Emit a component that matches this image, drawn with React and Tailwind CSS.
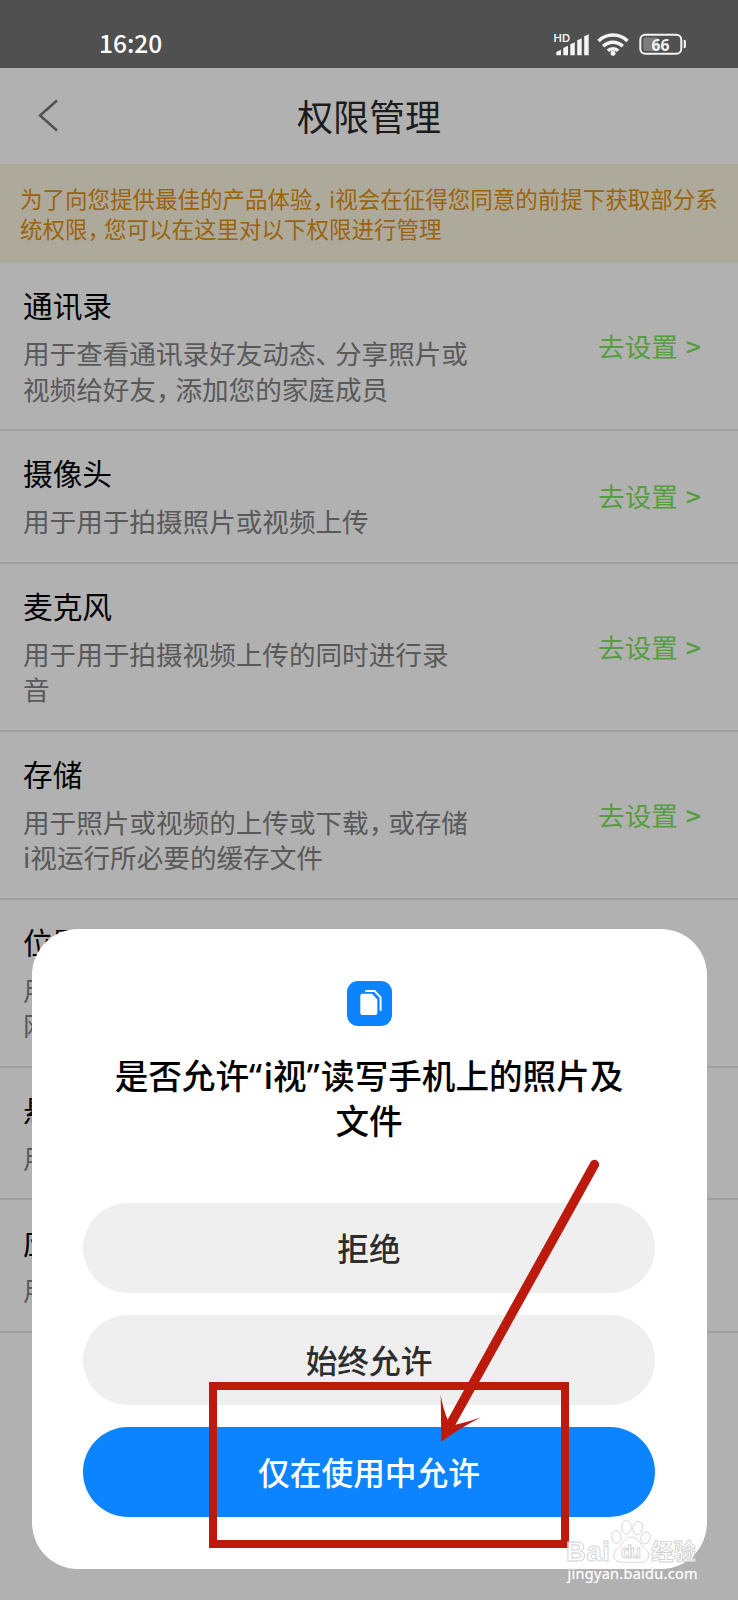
import clsx from 'clsx';

const permissions = [
  {
    title: '通讯录',
    lines: ['用于查看通讯录好友动态、分享照片或', '视频给好友，添加您的家庭成员'],
  },
  { title: '摄像头', lines: ['用于用于拍摄照片或视频上传'] },
  { title: '麦克风', lines: ['用于用于拍摄视频上传的同时进行录', '音'] },
  {
    title: '存储',
    lines: ['用于照片或视频的上传或下载，或存储', 'i视运行所必要的缓存文件'],
  },
  { title: '位置', lines: ['用', '网'] },
  { title: '悬', lines: ['用'] },
  { title: '应', lines: ['用'] },
];

const actions = [
  { label: '拒绝' },
  { label: '始终允许' },
  { label: '仅在使用中允许', primary: true },
];

// Full-width punctuation is set tighter than the characters around it
const Tight = ({ children }) =>
  children.split(/([，、])/).map((part, i) =>
    part === '，' || part === '、' ? (
      <span key={i} className="tracking-[-0.27em]">{part}</span>
    ) : (
      part
    )
  );

const StatusBar = () => (
  <div className="h-[68px] shrink-0 bg-[#505050] flex items-center justify-between pt-[17px] pl-[99px] pr-[50px] text-white">
    <span className="pt-0.5 text-[24.500px] leading-none font-medium">16:20</span>
    <svg className="w-[134px] h-7" viewBox="554 28.5 134 28" fill="#f4f4f4">
      <text x="553.500" y="41" fontSize="10" fontWeight="600" textLength="16.500" lengthAdjust="spacingAndGlyphs" fontFamily="Inter, sans-serif">HD</text>
      {/* Сигнал */}
      <path d="M556.300 51.500l4.700-2.200v5.400h-4.700zM563.300 47.500l4.700-2.200v9.400h-4.700zM570.300 43.700l4.500-2v13h-4.500zM577.200 39.700l4.500-2v17h-4.500zM584.200 35.700l4.500-2v21h-4.500z" />
      {/* Wi-Fi */}
      <g fill="none" stroke="#f4f4f4" strokeWidth="3.500">
        <path d="M598.500 40.600a20.500 20.500 0 0 1 29 0" />
        <path d="M603.200 45.700a14 14 0 0 1 19.600 0" />
        <path d="M607.800 50.300a7.500 7.500 0 0 1 10.400 0" />
      </g>
      <circle cx="613" cy="52.800" r="2.500" />
      {/* Батарея */}
      <rect x="640.300" y="34.300" width="41" height="19" rx="5" fill="none" stroke="#f4f4f4" strokeWidth="2" />
      <rect x="643.300" y="37" width="15" height="13.500" rx="2" fill="#7d7d7d" />
      <path d="M683.700 39.500h1.200a1 1 0 0 1 1 1v6a1 1 0 0 1-1 1h-1.200z" />
      <text x="651.500" y="50" fontSize="15.500" fontWeight="700" textLength="18" lengthAdjust="spacingAndGlyphs" fontFamily="'Open Sans', sans-serif">66</text>
    </svg>
  </div>
);

const Header = () => (
  <div className="relative h-24 shrink-0 flex items-center justify-center">
    <svg className="absolute left-[38px] top-[31px] w-5 h-[33px]" viewBox="0 0 20 33" fill="none" stroke="#505050" strokeWidth="2.4">
      <path d="M19 1.500L2 16.500L19 31.500" />
    </svg>
    <h1 className="pb-0.5 text-[36px] leading-none text-[#1c1c1c]">权限管理</h1>
  </div>
);

const PermissionRow = ({ title, lines }) => (
  <div
    className={clsx(
      'shrink-0 flex items-center justify-between border-b-2 border-[#9f9f9f] pl-[23px] pr-[37px]',
      lines.length > 1 ? 'h-[168px]' : 'h-[132.500px]'
    )}
  >
    <div className="self-start pt-6">
      <h2 className="text-[29.700px] leading-9 mb-3 text-black">{title}</h2>
      {lines.map(line => (
        <p key={line} className="text-[26.600px] leading-[35.500px] whitespace-nowrap text-[#595959]">
          <Tight>{line}</Tight>
        </p>
      ))}
    </div>
    <span className="text-[26.600px] [word-spacing:2px] text-[#559d3e]">
      去设置 <span className="font-medium">&gt;</span>
    </span>
  </div>
);

const FilesIcon = () => (
  <svg className="size-[45px] shrink-0" viewBox="0 0 45 45">
    <rect width="45" height="45" rx="11" fill="#0d84ff" />
    <path d="M15.300 12.700h9.700l5.300 5.800V32a2 2 0 0 1-2 2h-13a2 2 0 0 1-2-2V14.700a2 2 0 0 1 2-2z" fill="white" />
    <path d="M18.300 10h9.300l6 6.300v13.500" fill="none" stroke="white" strokeWidth="2" />
  </svg>
);

const PermissionDialog = () => (
  <div className="absolute left-[31.500px] top-[929px] w-[675px] h-[640px] rounded-[46px] bg-white flex flex-col items-center pt-[52px] px-[51.500px]">
    <FilesIcon />
    <p className="mt-[27px] text-[33.600px] leading-[44px] font-medium text-center whitespace-nowrap text-black">
      是否允许<span className="font-['Noto_Sans'] tracking-[1.500px]">“</span>i视<span className="font-['Noto_Sans'] tracking-[1.500px]">”</span>读写手机上的照片及
      <br />
      文件
    </p>
    <div className="mt-[61px] w-full flex flex-col gap-[22px]">
      {actions.map(({ label, primary }) => (
        <button
          key={label}
          className={clsx(
            'h-[90px] w-full rounded-full text-[31.700px] font-medium',
            primary ? 'bg-[#0d84ff] text-white' : 'bg-[#efefef] text-[#2d2d2d]'
          )}
        >
          {label}
        </button>
      ))}
    </div>
  </div>
);

const Highlight = () => (
  <>
    <div className="absolute left-[209px] top-[1382px] w-[360px] h-[166px] border-[8.500px] border-[#bc1a0c]" />
    <svg className="absolute left-[430px] top-[1150px] w-[180px] h-[300px]" viewBox="430 1150 180 300" fill="#bc1a0c">
      <path d="M594.500 1164.500L450 1425" stroke="#bc1a0c" strokeWidth="9.300" strokeLinecap="round" />
      <path d="M441.300 1441.700L440.700 1395Q443 1409 448 1420.500L455.500 1424.700Q469 1422 481 1417.300Q460 1428 441.300 1441.700z" />
    </svg>
  </>
);

const Watermark = () => (
  <svg className="absolute left-[560px] top-[1512px] w-[145px] h-[76px]" viewBox="560 1512 145 76">
    <g fill="white" fillOpacity="0.75" stroke="#d2d2d2" strokeWidth="0.900">
      <text x="566" y="1561" fontSize="27.500" fontWeight="700" textLength="44" fontFamily="'Liberation Sans', sans-serif">Bai</text>
      <ellipse cx="616.500" cy="1537" rx="4.700" ry="6.300" transform="rotate(-12 616.500 1537)" />
      <ellipse cx="626.500" cy="1527.300" rx="4.800" ry="6.800" />
      <ellipse cx="637.700" cy="1528" rx="4.800" ry="6.800" transform="rotate(10 637.700 1528)" />
      <ellipse cx="645.500" cy="1538" rx="4.500" ry="6.200" transform="rotate(20 645.500 1538)" />
      <path d="M631 1537c6 0 8 5 11.500 9s7.500 6 6 11.500c-1.500 5-6.500 5.500-17 4.500c-11 1-16.500 0-17.500-5c-1-5.500 3-7.500 6.500-11.500s5-8.500 10.500-8.500z" />
      <text x="621" y="1558" fontSize="18" fontWeight="700" textLength="20" fontFamily="'Liberation Sans', sans-serif">du</text>
      <text x="651" y="1560" fontSize="22.500" fontWeight="700" fontFamily="'Noto Sans CJK SC', sans-serif">经验</text>
    </g>
    <text x="567.500" y="1578.500" fontSize="14.500" textLength="130" fill="white" stroke="#d2d2d2" strokeWidth="0.600" paintOrder="stroke" fontFamily="'Noto Sans', sans-serif">jingyan.baidu.com</text>
  </svg>
);

export default function App() {
  return (
    <div className="relative w-[738px] h-[1600px] overflow-hidden bg-[#b1b1b1] flex flex-col font-['Noto_Sans_CJK_SC',sans-serif]">
      <StatusBar />
      <Header />
      <div className="h-[99px] shrink-0 bg-[#aeaa9b] pl-5 pt-5 text-[22.500px] leading-[29.500px] text-[#9b630b] whitespace-nowrap">
        <p><Tight>为了向您提供最佳的产品体验，i视会在征得您同意的前提下获取部分系</Tight></p>
        <p><Tight>统权限，您可以在这里对以下权限进行管理</Tight></p>
      </div>
      {permissions.map(item => (
        <PermissionRow key={item.title} {...item} />
      ))}
      <PermissionDialog />
      <Highlight />
      <Watermark />
    </div>
  );
}
